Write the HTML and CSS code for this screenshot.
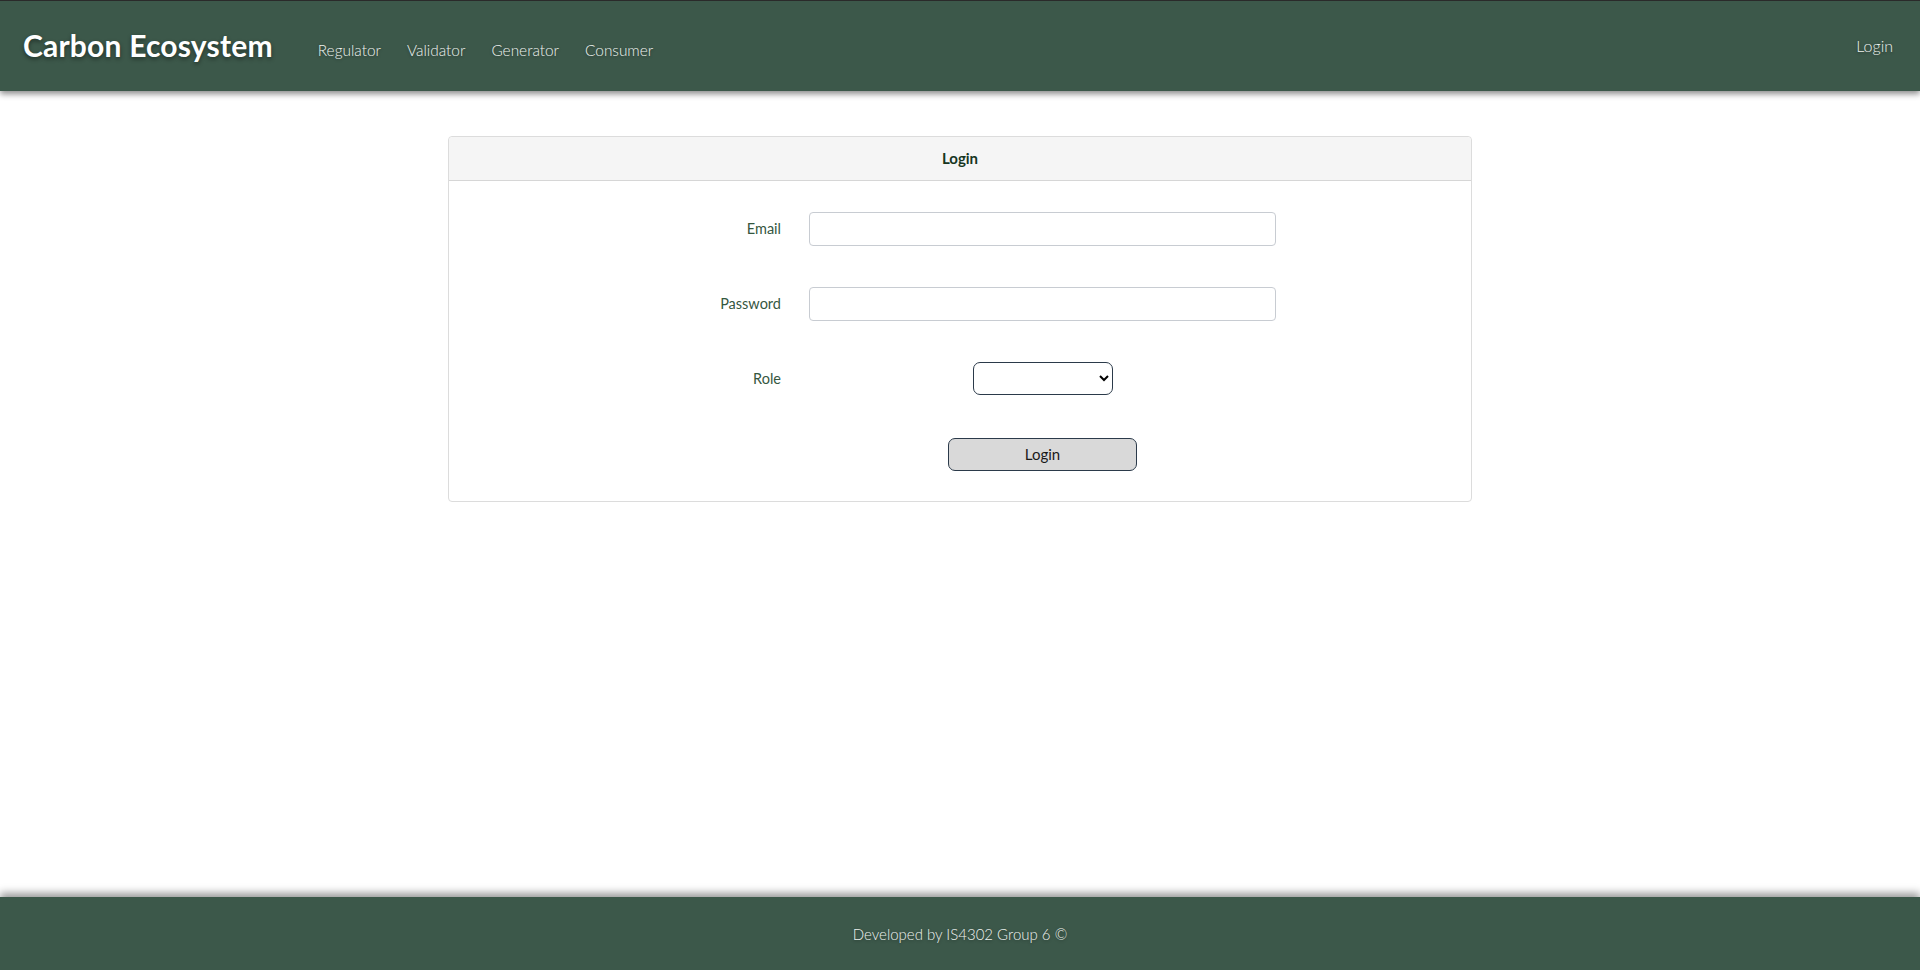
FILE: index.html
```html
<!DOCTYPE html>
<html lang="en">
<head>
<meta charset="utf-8">
<title>Carbon Ecosystem</title>
<link rel="stylesheet" href="styles.css">
</head>
<body>
<div class="page">
  <header class="topbar">
    <div class="brand">Carbon Ecosystem</div>
    <nav class="nav">
      <a class="nav-link" href="#">Regulator</a>
      <a class="nav-link" href="#">Validator</a>
      <a class="nav-link" href="#">Generator</a>
      <a class="nav-link" href="#">Consumer</a>
    </nav>
    <a class="login-link" href="#">Login</a>
  </header>

  <main class="main">
    <section class="card">
      <div class="card-header">Login</div>
      <form class="card-body">
        <div class="form-row">
          <label class="form-label" for="email">Email</label>
          <div class="form-field"><input id="email" class="text-input" type="email"></div>
        </div>
        <div class="form-row">
          <label class="form-label" for="password">Password</label>
          <div class="form-field"><input id="password" class="text-input" type="password"></div>
        </div>
        <div class="form-row">
          <label class="form-label" for="role">Role</label>
          <div class="form-field centered"><select id="role" class="role-select"><option></option></select></div>
        </div>
        <div class="form-row">
          <div class="form-label"></div>
          <div class="form-field centered"><button class="login-btn" type="button">Login</button></div>
        </div>
      </form>
    </section>
  </main>

  <footer class="footer">Developed by IS4302 Group 6 ©</footer>
</div>
</body>
</html>
```

FILE: styles.css
```css
* { box-sizing: border-box; }

html, body {
  margin: 0;
  padding: 0;
  background: #ffffff;
  font-family: Lato, "Open Sans", "Liberation Sans", sans-serif;
}

.page {
  min-height: 970px;
  display: flex;
  flex-direction: column;
}

.topbar {
  height: 91px;
  background: #3c584a;
  border-top: 1px solid #2a2a2a;
  display: flex;
  align-items: center;
  padding: 0 27px 0 23px;
  box-shadow: 0 3px 6px rgba(0, 0, 0, 0.45);
  position: relative;
  z-index: 2;
}

.brand {
  color: #ffffff;
  font-size: 30px;
  font-weight: 700;
  letter-spacing: 0.2px;
  text-shadow: 0 2px 4px rgba(0, 0, 0, 0.45);
  margin-bottom: 2px;
}

.nav {
  display: flex;
  gap: 26px;
  margin-left: 45px;
  padding-top: 7px;
}

.nav-link, .login-link {
  color: #eef2ef;
  font-size: 15.4px;
  font-weight: 300;
  text-decoration: none;
  text-shadow: 0 1px 3px rgba(0, 0, 0, 0.35);
}

.login-link {
  margin-left: auto;
  font-size: 16px;
  margin-bottom: 2px;
}

.main {
  flex: 1;
  display: flex;
  justify-content: center;
  align-items: flex-start;
  padding-top: 45px;
}

.card {
  width: 1024px;
  border: 1px solid #dcdcdc;
  border-radius: 4px;
  background: #ffffff;
}

.card-header {
  height: 44px;
  background: #f5f5f5;
  border-bottom: 1px solid #d6d6d6;
  border-radius: 4px 4px 0 0;
  display: flex;
  align-items: center;
  justify-content: center;
  color: #17361f;
  font-size: 15px;
  font-weight: 700;
  padding-bottom: 1px;
}

.card-body {
  margin: 0;
  padding: 31px 0 30px;
  display: flex;
  flex-direction: column;
  gap: 41px;
}

.form-row {
  display: grid;
  grid-template-columns: 332px 467px;
  column-gap: 28px;
  align-items: center;
  height: 34px;
}

.form-label {
  text-align: right;
  color: #35573f;
  font-size: 14.5px;
  padding-bottom: 2px;
}

.form-field {
  display: flex;
}

.form-field.centered {
  justify-content: center;
}

.text-input {
  width: 467px;
  height: 34px;
  border: 1px solid #c8ccd2;
  border-radius: 4px;
  background: #ffffff;
  padding: 0 10px;
  font-size: 15px;
  font-family: inherit;
}

.role-select {
  width: 140px;
  height: 33px;
  border: 1px solid #2b3a4a;
  border-radius: 7px;
  background: #ffffff;
  font-family: inherit;
  font-size: 15px;
  padding: 0 6px;
  margin-top: -2px;
}

.login-btn {
  width: 189px;
  height: 33px;
  background: #d9d9d9;
  border: 1px solid #2b3a4a;
  border-radius: 7px;
  color: #1a1a1a;
  font-family: inherit;
  font-size: 15px;
  font-weight: 400;
  padding: 0;
}

.footer {
  height: 73px;
  background: #3c584a;
  display: flex;
  align-items: center;
  justify-content: center;
  color: #eef2ef;
  font-size: 15px;
  font-weight: 300;
  text-shadow: 0 1px 3px rgba(0, 0, 0, 0.35);
  box-shadow: 0 -4px 8px rgba(0, 0, 0, 0.4);
}
```
